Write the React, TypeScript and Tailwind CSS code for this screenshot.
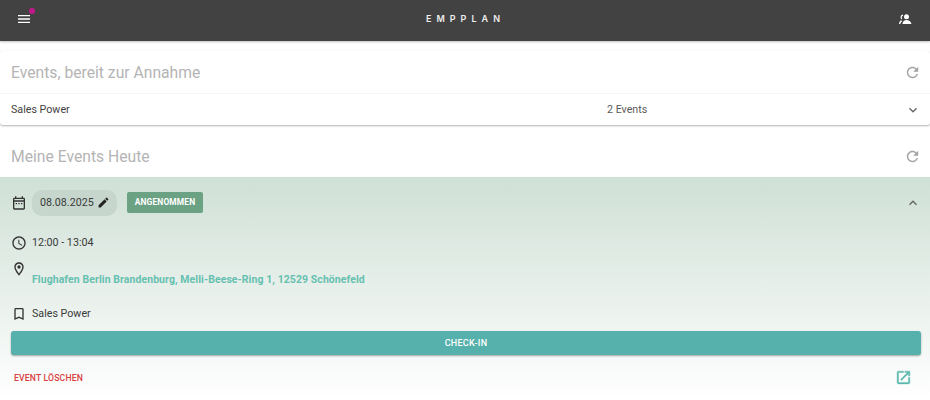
import React from "react";

const P = ({ d, className, bold }: { d: string; className: string; bold?: boolean }) => (
  <svg viewBox="0 0 24 24" fill="currentColor" stroke={bold ? "currentColor" : "none"} strokeWidth={bold ? 0.6 : 0} className={className}><path d={d} /></svg>
);

const refresh = "M17.65 6.35C16.2 4.9 14.21 4 12 4c-4.42 0-7.99 3.58-7.99 8s3.57 8 7.99 8c3.73 0 6.84-2.55 7.73-6h-2.08c-.82 2.33-3.04 4-5.65 4-3.31 0-6-2.69-6-6s2.69-6 6-6c1.66 0 3.14.69 4.22 1.78L13 11h7V4l-2.35 2.35z";
const down = "M7.41 8.59 12 13.17l4.59-4.58L18 10l-6 6-6-6 1.41-1.41z";
const up = "M7.41 15.41 12 10.83l4.59 4.58L18 14l-6-6-6 6z";
const menu = "M3 18h18v-2H3v2zm0-5h18v-2H3v2zm0-7v2h18V6H3z";
const calendar = "M19 4h-1V2h-2v2H8V2H6v2H5c-1.11 0-2 .9-2 2v14c0 1.1.89 2 2 2h14c1.1 0 2-.9 2-2V6c0-1.1-.9-2-2-2zm0 16H5V10h14v10zm0-12H5V6h14v2zM7 12h2v2H7zm4 0h2v2h-2zm4 0h2v2h-2z";
const pencil = "M3 17.25V21h3.75L17.81 9.94l-3.75-3.75L3 17.25zM20.71 7.04a1 1 0 0 0 0-1.41l-2.34-2.34a1 1 0 0 0-1.41 0l-1.83 1.83 3.75 3.75 1.83-1.83z";
const clock = "M11.99 2C6.47 2 2 6.48 2 12s4.47 10 9.99 10C17.52 22 22 17.52 22 12S17.52 2 11.99 2zM12 20c-4.42 0-8-3.58-8-8s3.58-8 8-8 8 3.58 8 8-3.58 8-8 8zm.5-13H11v6l5.25 3.15.75-1.23-4.5-2.67V7z";
const pin = "M12 2C8.13 2 5 5.13 5 9c0 5.25 7 13 7 13s7-7.75 7-13c0-3.87-3.13-7-7-7zM7 9c0-2.76 2.24-5 5-5s5 2.24 5 5c0 2.88-2.88 7.19-5 9.88C9.92 16.21 7 11.85 7 9zm5-2.5a2.5 2.5 0 1 0 0 5 2.5 2.5 0 0 0 0-5z";
const bookmark = "M17 3H7c-1.1 0-2 .9-2 2v16l7-3 7 3V5c0-1.1-.9-2-2-2zm0 15-5-2.18L7 18V5h10v13z";
const open = "M19 19H5V5h7V3H5a2 2 0 0 0-2 2v14a2 2 0 0 0 2 2h14c1.1 0 2-.9 2-2v-7h-2v7zM14 3v2h3.59l-9.83 9.83 1.41 1.41L19 6.41V10h2V3h-7z";

const Title = ({ children }: { children: string }) => (
  <div className="flex h-[42px] items-center justify-between pl-[11px] pr-[9px]">
    <span className="pt-[1px] text-[15.700px] text-[#b4b4b4]">{children}</span>
    <P d={refresh} className="h-[17px] w-[17px] text-[#a3a3a3]" />
  </div>
);

export default function App() {
  return (
    <div className="flex h-[400px] w-[930px] flex-col overflow-hidden bg-white font-['Roboto',sans-serif]">
      <header className="flex h-[41px] shrink-0 items-center justify-between bg-[#424242] pl-[16px] pr-[18px] shadow-[0_1px_2px_rgba(0,0,0,0.25)]">
        <div className="relative -mt-[3px]">
          <P d={menu} className="h-[16px] w-[16px] text-white" />
          <span className="absolute -right-[3px] -top-[3px] h-[6px] w-[6px] rounded-full bg-[#c2188b]" />
        </div>
        <span className="-mt-[3px] text-[9px] font-semibold tracking-[0.56em] text-[#eeeeee] font-['Inter',sans-serif]">EMPPLAN</span>
        <svg viewBox="0 0 13 10" fill="currentColor" className="-mt-[3px] h-[10px] w-[13px] text-white">
          <circle cx="7.500" cy="2.700" r="2.500" />
          <path d="M3.500 10c0-2.600 2-4 4-4s4.500 1.400 5 4h-9z" />
          <path d="M4 .5A2.800 2.800 0 0 0 1.500 3.200 2.800 2.800 0 0 0 3 5.600V4.300a1.500 1.500 0 0 1 1-2.400V.5zM2.200 6.300C.8 6.900.2 8.200 0 10h1.400c.2-1.200.6-2 1.800-2.700z" />
        </svg>
      </header>

      <section className="mt-[10px] shrink-0 rounded-[3px] bg-white shadow-[0_1px_2px_rgba(0,0,0,0.3)]">
        <Title>Events, bereit zur Annahme</Title>
        <div className="flex h-[32px] items-center justify-between border-t border-[#f5f5f5] pl-[11px] pr-[9px] text-[10.700px] text-[#424242]">
          <span className="w-[596px] pt-[1px]">Sales Power</span>
          <span className="mr-auto pt-[1px] text-[#5a5a5a]">2 Events</span>
          <P d={down} className="h-[16px] w-[16px] text-[#666666]" />
        </div>
      </section>

      <section className="mt-[10px] flex min-h-0 flex-1 flex-col bg-white">
        <Title>Meine Events Heute</Title>
        <div className="flex flex-1 flex-col bg-gradient-to-b from-[#cfe0d6] to-[#ffffff] pl-[11px] pr-[9px] text-[10.700px] text-[#3a3a3a]">
          <div className="flex h-[51px] shrink-0 items-center">
            <P d={calendar} className="h-[16px] w-[16px] text-[#333333]" />
            <div className="ml-[5px] flex h-[26px] w-[85px] items-center rounded-[10px] bg-[#c6d6cd] pl-[8px]">
              <span className="pt-[2px] text-[#3a3a3a]">08.08.2025</span>
              <P d={pencil} className="ml-[3px] h-[13px] w-[13px] text-[#222222]" />
            </div>
            <span className="ml-[10px] flex h-[21px] w-[76px] items-center justify-center rounded-[2px] bg-[#6ba283] text-[8.400px] font-bold tracking-[0.02em] text-white">ANGENOMMEN</span>
            <P d={up} className="ml-auto h-[16px] w-[16px] text-[#666666]" />
          </div>
          <div className="flex h-[30px] shrink-0 items-center gap-[5px]">
            <P d={clock} className="h-[16px] w-[16px] text-[#333333]" />
            <span>12:00 - 13:04</span>
          </div>
          <div className="flex h-[43px] shrink-0 gap-[5px] pt-[3px]">
            <P d={pin} className="h-[16px] w-[16px] text-[#333333]" />
            <span className="mt-[11px] text-[10.440px] font-bold tracking-[0.01em] text-[#66c0b0]">Flughafen Berlin Brandenburg, Melli-Beese-Ring 1, 12529 Schönefeld</span>
          </div>
          <div className="flex h-[26px] shrink-0 items-center gap-[5px]">
            <P d={bookmark} className="h-[16px] w-[16px] text-[#333333]" />
            <span>Sales Power</span>
          </div>
          <button className="mt-[4px] flex h-[24px] shrink-0 items-center justify-center rounded-[3px] bg-[#56b0ab] pt-[2px] text-[9px] font-medium tracking-[0.03em] text-white shadow-[0_1px_2px_rgba(0,0,0,0.35)]">CHECK-IN</button>
          <div className="flex flex-1 items-center justify-between pb-[1px] pl-[3px] pr-[9px]">
            <span className="pt-[2px] text-[8.650px] font-medium tracking-[0.02em] text-[#d9403f]">EVENT LÖSCHEN</span>
            <P d={open} bold className="h-[17px] w-[17px] text-[#5cb8ae]" />
          </div>
        </div>
      </section>
    </div>
  );
}
